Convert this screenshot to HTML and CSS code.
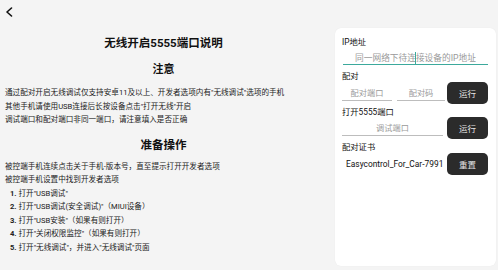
FILE: index.html
```html
<!DOCTYPE html>
<html lang="zh">
<head>
<meta charset="utf-8">
<link rel="stylesheet" href="styles.css">
</head>
<body>
<div class="page">
  <div class="left">
    <div class="topbar">
      <svg class="back" width="8" height="10" viewBox="0 0 8 10"><path d="M6.5 1 L2 5 L6.5 9" fill="none" stroke="#111" stroke-width="1.6" stroke-linecap="round" stroke-linejoin="round"/></svg>
    </div>
    <div class="doc">
      <h1 class="title">无线开启5555端口说明</h1>
      <h2 class="sub">注意</h2>
      <p class="line">通过配对开启无线调试仅支持安卓11及以上、开发者选项内有"无线调试"选项的手机</p>
      <p class="line">其他手机请使用USB连接后长按设备点击"打开无线"开启</p>
      <p class="line">调试端口和配对端口非同一端口，请注意填入是否正确</p>
      <h2 class="sub sub2">准备操作</h2>
      <div class="steps">
        <p class="line">被控端手机连续点击关于手机-版本号，直至提示打开开发者选项</p>
        <p class="line">被控端手机设置中找到开发者选项</p>
        <p class="line item"><b>1.</b> 打开"USB调试"</p>
        <p class="line item"><b>2.</b> 打开"USB调试(安全调试)"（MIUI设备）</p>
        <p class="line item"><b>3.</b> 打开"USB安装"（如果有则打开）</p>
        <p class="line item"><b>4.</b> 打开"关闭权限监控"（如果有则打开）</p>
        <p class="line item"><b>5.</b> 打开"无线调试"，并进入"无线调试"页面</p>
      </div>
    </div>
  </div>
  <div class="card">
    <div class="label">IP地址</div>
    <div class="field full focused"><span class="ph ph-ip">同一网络下待连接设备的IP地址</span><span class="cursor"></span></div>
    <div class="label">配对</div>
    <div class="row">
      <div class="field f1"><span class="ph">配对端口</span></div>
      <div class="field f2"><span class="ph">配对码</span></div>
      <div class="btn">运行</div>
    </div>
    <div class="label tight">打开5555端口</div>
    <div class="row">
      <div class="field f3"><span class="ph">调试端口</span></div>
      <div class="btn">运行</div>
    </div>
    <div class="label">配对证书</div>
    <div class="row center">
      <div class="cert">Easycontrol_For_Car-7991</div>
      <div class="btn">重置</div>
    </div>
  </div>
</div>
</body>
</html>
```

FILE: styles.css
```css
html, body {
  margin: 0;
  padding: 0;
  background: #f4f4f4;
}
body {
  width: 498px;
  height: 270px;
  overflow: hidden;
  font-family: Roboto, "Noto Sans CJK SC", sans-serif;
  color: #1a1a1a;
}
.page {
  display: flex;
  height: 270px;
}
.left {
  width: 335px;
  flex: none;
}
.topbar {
  height: 24px;
  padding-left: 5px;
  display: flex;
  align-items: flex-start;
}
.back {
  margin-top: 7px;
}
.doc {
  padding-left: 5px;
}
.title {
  margin: 11px 0 0;
  font-size: 11.5px;
  line-height: 16px;
  font-weight: 700;
  text-align: center;
  padding-right: 13px;
  color: #111;
}
.sub {
  margin: 11px 0 0;
  font-size: 11px;
  line-height: 16px;
  font-weight: 700;
  text-align: center;
  padding-right: 13px;
  color: #111;
}
.sub2 {
  font-size: 11.5px;
  margin-top: 10px;
}
.line {
  margin: 0;
  font-size: 7.6px;
  line-height: 13.5px;
  color: #222;
  white-space: nowrap;
}
.sub + .line {
  margin-top: 8px;
}
.steps {
  margin-top: 7px;
}
.item {
  padding-left: 5px;
}
.item b {
  font-weight: 700;
}
.card {
  margin-top: 28px;
  width: 161px;
  height: 238px;
  box-sizing: border-box;
  background: #fff;
  border-radius: 6px;
  box-shadow: 0 0 1px rgba(0,0,0,0.08);
  padding: 9px 7px 0 7px;
}
.label {
  font-size: 8.3px;
  line-height: 11px;
  color: #111;
}
.label.tight {
  margin-bottom: -1px;
}
.field {
  position: relative;
  border-bottom: 1px solid #bdbdbd;
  display: flex;
  align-items: center;
  justify-content: center;
  box-sizing: border-box;
}
.full {
  margin: 2px 1px 6px 1px;
  height: 15px;
}
.focused {
  border-bottom: 1.5px solid #3ca99c;
}
.cursor {
  position: absolute;
  left: 72px;
  top: 2px;
  width: 1px;
  height: 12px;
  background: #3ca99c;
}
.ph {
  font-size: 8.2px;
  color: #9a9a9a;
  white-space: nowrap;
}
.ph-ip {
  font-size: 8.7px;
}
.row {
  display: flex;
  align-items: flex-end;
  margin-bottom: 3px;
}
.f1 { width: 50px; }
.f2 { width: 48px; margin-left: 5px; }
.f3 { width: 101px; }
.field.f1, .field.f2, .field.f3 {
  height: 18px;
  margin-bottom: 3px;
}
.btn {
  margin-left: auto;
  margin-right: 1px;
  width: 41px;
  height: 22px;
  border-radius: 5px;
  background: #2b2b2b;
  color: #e6e6e6;
  font-size: 8.5px;
  display: flex;
  align-items: center;
  justify-content: center;
}
.cert {
  font-size: 8.4px;
  line-height: 22px;
  padding-left: 4px;
  color: #111;
  white-space: nowrap;
}
.row.center {
  align-items: center;
}
```
